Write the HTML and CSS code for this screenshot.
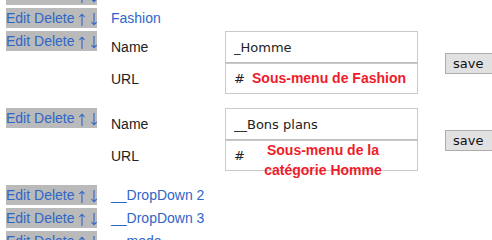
FILE: index.html
```html
<!DOCTYPE html>
<html lang="fr">
<head>
<meta charset="utf-8">
<title>Menu</title>
<link rel="stylesheet" href="styles.css">
</head>
<body>
<ul class="menu">
  <li class="item">
    <span class="actions"><a href="#">Edit</a> <a href="#">Delete</a> <a class="arrow" href="#" aria-label="monter"><svg viewBox="0 0 8 13" width="8" height="13"><path d="M4 13V1.2M1.4 4L4 1.2L6.6 4"/></svg></a> <a class="arrow" href="#" aria-label="descendre"><svg viewBox="0 0 8 13" width="8" height="13"><path d="M4 0V11.8M1.4 9L4 11.8L6.6 9"/></svg></a></span>
    <a class="title" href="#">Accueil</a>
  </li>
  <li class="item">
    <span class="actions"><a href="#">Edit</a> <a href="#">Delete</a> <a class="arrow" href="#" aria-label="monter"><svg viewBox="0 0 8 13" width="8" height="13"><path d="M4 13V1.2M1.4 4L4 1.2L6.6 4"/></svg></a> <a class="arrow" href="#" aria-label="descendre"><svg viewBox="0 0 8 13" width="8" height="13"><path d="M4 0V11.8M1.4 9L4 11.8L6.6 9"/></svg></a></span>
    <a class="title" href="#">Fashion</a>
  </li>
  <li class="item item-form">
    <span class="actions"><a href="#">Edit</a> <a href="#">Delete</a> <a class="arrow" href="#" aria-label="monter"><svg viewBox="0 0 8 13" width="8" height="13"><path d="M4 13V1.2M1.4 4L4 1.2L6.6 4"/></svg></a> <a class="arrow" href="#" aria-label="descendre"><svg viewBox="0 0 8 13" width="8" height="13"><path d="M4 0V11.8M1.4 9L4 11.8L6.6 9"/></svg></a></span>
    <form class="edit">
      <div class="fields">
        <label class="label">Name</label>
        <div class="cell"><input class="input name" type="text" value="_Homme"></div>
        <label class="label">URL</label>
        <div class="cell">
          <input class="input" type="text" value="#">
          <span class="note note-one">Sous-menu de Fashion</span>
        </div>
      </div>
      <button class="save" type="button">save</button>
    </form>
  </li>
  <li class="item item-form">
    <span class="actions"><a href="#">Edit</a> <a href="#">Delete</a> <a class="arrow" href="#" aria-label="monter"><svg viewBox="0 0 8 13" width="8" height="13"><path d="M4 13V1.2M1.4 4L4 1.2L6.6 4"/></svg></a> <a class="arrow" href="#" aria-label="descendre"><svg viewBox="0 0 8 13" width="8" height="13"><path d="M4 0V11.8M1.4 9L4 11.8L6.6 9"/></svg></a></span>
    <form class="edit">
      <div class="fields">
        <label class="label">Name</label>
        <div class="cell"><input class="input name" type="text" value="__Bons plans"></div>
        <label class="label">URL</label>
        <div class="cell">
          <input class="input" type="text" value="#">
          <span class="note note-two">Sous-menu de la<br>catégorie Homme</span>
        </div>
      </div>
      <button class="save" type="button">save</button>
    </form>
  </li>
  <li class="item">
    <span class="actions"><a href="#">Edit</a> <a href="#">Delete</a> <a class="arrow" href="#" aria-label="monter"><svg viewBox="0 0 8 13" width="8" height="13"><path d="M4 13V1.2M1.4 4L4 1.2L6.6 4"/></svg></a> <a class="arrow" href="#" aria-label="descendre"><svg viewBox="0 0 8 13" width="8" height="13"><path d="M4 0V11.8M1.4 9L4 11.8L6.6 9"/></svg></a></span>
    <a class="title" href="#">__DropDown 2</a>
  </li>
  <li class="item">
    <span class="actions"><a href="#">Edit</a> <a href="#">Delete</a> <a class="arrow" href="#" aria-label="monter"><svg viewBox="0 0 8 13" width="8" height="13"><path d="M4 13V1.2M1.4 4L4 1.2L6.6 4"/></svg></a> <a class="arrow" href="#" aria-label="descendre"><svg viewBox="0 0 8 13" width="8" height="13"><path d="M4 0V11.8M1.4 9L4 11.8L6.6 9"/></svg></a></span>
    <a class="title" href="#">__DropDown 3</a>
  </li>
  <li class="item">
    <span class="actions"><a href="#">Edit</a> <a href="#">Delete</a> <a class="arrow" href="#" aria-label="monter"><svg viewBox="0 0 8 13" width="8" height="13"><path d="M4 13V1.2M1.4 4L4 1.2L6.6 4"/></svg></a> <a class="arrow" href="#" aria-label="descendre"><svg viewBox="0 0 8 13" width="8" height="13"><path d="M4 0V11.8M1.4 9L4 11.8L6.6 9"/></svg></a></span>
    <a class="title" href="#">__mode</a>
  </li>
</ul>
</body>
</html>
```
FILE: styles.css
```css
html, body {
  margin: 0;
  padding: 0;
  background: #ffffff;
  overflow: hidden;
}

body {
  font-family: "Liberation Sans", Arial, sans-serif;
  font-size: 14px;
  color: #222222;
}

.menu {
  list-style: none;
  margin: -15px 0 0 0;
  padding: 0 0 0 6px;
  display: flex;
  flex-direction: column;
  gap: 3px;
}

.item {
  display: flex;
  align-items: flex-start;
  gap: 14px;
}

.actions {
  display: block;
  flex: 0 0 91px;
  height: 20px;
  line-height: 20px;
  background: #bababa;
  white-space: nowrap;
  overflow: hidden;
}

.actions a,
.title {
  color: #2f66c8;
  text-decoration: none;
}

.arrow svg {
  display: inline-block;
  vertical-align: top;
  margin-top: 5px;
  fill: none;
  stroke: currentColor;
  stroke-width: 1.1;
}

.title {
  line-height: 20px;
}

.item-form {
  padding-bottom: 11px;
}

.edit {
  display: flex;
  align-items: center;
  margin: 0;
}

.fields {
  display: grid;
  grid-template-columns: 114px 193px;
  grid-template-rows: 32px 31px;
}

.label {
  align-self: center;
  color: #222222;
}

.cell {
  position: relative;
}

.input {
  box-sizing: border-box;
  width: 193px;
  height: 100%;
  margin: 0;
  padding: 0 0 0 8px;
  border: 1px solid #cacaca;
  font-family: "DejaVu Sans", Verdana, sans-serif;
  font-size: 13px;
  color: #222222;
  background: #ffffff;
  outline: none;
}

.name {
  border-bottom-color: #bdbdbd;
}

.note {
  position: absolute;
  font-family: "Liberation Sans", Arial, sans-serif;
  font-weight: bold;
  font-size: 14px;
  color: #ee1c2a;
  white-space: nowrap;
}

.note-one {
  left: 27px;
  top: 7px;
  line-height: 16px;
}

.note-two {
  left: 28px;
  width: 140px;
  top: 0;
  line-height: 20px;
  text-align: center;
}

.save {
  box-sizing: border-box;
  margin-left: 27px;
  margin-top: 2px;
  width: 52px;
  height: 21px;
  padding: 0 0 0 7px;
  text-align: left;
  border: 1px solid #adadad;
  background: #e1e1e1;
  font-family: "DejaVu Sans", Verdana, sans-serif;
  font-size: 13px;
  color: #111111;
  border-radius: 0;
}
```
